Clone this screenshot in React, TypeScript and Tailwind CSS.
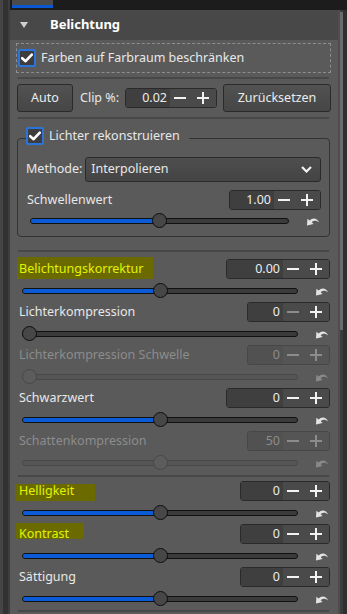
import type { ReactNode } from 'react';

function Check() {
  return (
    <span className="flex h-[18px] w-[18px] shrink-0 items-center justify-center rounded-[2px] border-2 border-[#2b74dc] bg-[#3d3d3d]">
      <svg width="12" height="10" viewBox="0 0 12 10">
        <path d="M1.2 5.2 L4.6 8.2 L10.8 1.6" stroke="#fff" strokeWidth="2.6" fill="none" strokeLinejoin="round" strokeLinecap="round" />
      </svg>
    </span>
  );
}

function Minus({ off }: { off?: boolean }) {
  return (
    <svg width="12" height="12" viewBox="0 0 12 12">
      <rect x="0" y="5" width="12" height="2" fill={off ? '#8c8c8c' : '#f2f2f2'} />
    </svg>
  );
}

function Plus({ off }: { off?: boolean }) {
  return (
    <svg width="12" height="12" viewBox="0 0 12 12">
      <rect x="0" y="5" width="12" height="2" fill={off ? '#8c8c8c' : '#f2f2f2'} />
      <rect x="5" y="0" width="2" height="12" fill={off ? '#8c8c8c' : '#f2f2f2'} />
    </svg>
  );
}

function Spin({ value, w, disabled, minusOff }: { value: string; w: string; disabled?: boolean; minusOff?: boolean }) {
  return (
    <div
      className={`flex h-[20px] overflow-hidden rounded-[3px] border ${
        disabled ? 'border-[#474747]' : 'border-[#2a2a2a]'
      }`}
    >
      <div
        className={`${w} pr-[3px] text-right leading-[18px] ${
          disabled ? 'bg-[#515151] text-[#8c8c8c]' : 'bg-[#3f3f3f] text-[#ececec]'
        }`}
      >
        {value}
      </div>
      <div className={`flex w-[46px] items-center gap-[11px] pl-[4px] ${disabled ? 'bg-[#555555]' : 'bg-[#4a4a4a]'}`}>
        <Minus off={disabled || minusOff} />
        <Plus off={disabled} />
      </div>
    </div>
  );
}

function Reset({ off }: { off?: boolean }) {
  return (
    <svg width="14" height="10" viewBox="0 0 14 10">
      <path
        d="M1 9.5 L1.4 2.8 L3.6 4.6 C6.5 1.4 11 1.6 13.2 6.6 C10.6 4.2 7.6 4.2 5.7 6.3 L7.6 8.1 Z"
        fill={off ? '#8a8a8a' : '#e4e4e4'}
      />
    </svg>
  );
}

function Slider({ p, fill, disabled }: { p: number; fill?: boolean; disabled?: boolean }) {
  return (
    <div className="relative h-[15px] flex-1">
      <div
        className={`absolute left-0 right-0 top-[5px] h-[6px] overflow-hidden rounded-full border ${
          disabled ? 'border-[#484848] bg-[#565656]' : 'border-[#111111] bg-[#3b3b3b]'
        }`}
      >
        {fill && <div className="h-full bg-[#0b5ad6]" style={{ width: `${p * 100}%` }} />}
      </div>
      <div
        className={`absolute top-0 h-[15px] w-[15px] rounded-full border ${
          disabled ? 'border-[#484848] bg-[#5c5c5c]' : 'border-[#0e0e0e] bg-[#474747]'
        }`}
        style={{ left: `calc(${p * 100}% - ${p * 15}px)` }}
      />
    </div>
  );
}

function Sep({ className }: { className: string }) {
  return <div className={`mx-[2px] h-[2px] bg-[#474747] ${className}`} />;
}

type Param = {
  label: string;
  value: string;
  w: string;
  p: number;
  fill?: boolean;
  disabled?: boolean;
  minusOff?: boolean;
  mark?: string;
};

function ParamRow({ item }: { item: Param }) {
  const labelCls = item.disabled ? 'text-[#8c8c8c]' : item.mark ? 'text-[#e2f400]' : 'text-[#e8e8e8]';
  return (
    <div>
      <div className="flex h-[20px] items-center justify-between pl-[3px] pr-[1px]">
        <span className={`relative ${labelCls}`}>
          {item.mark && <span className={`absolute bg-[#6a6a00] ${item.mark}`} />}
          <span className="relative">{item.label}</span>
        </span>
        <Spin value={item.value} w={item.w} disabled={item.disabled} minusOff={item.minusOff} />
      </div>
      <div className="flex h-[23px] items-center">
        <div className="ml-[6px] flex flex-1 items-center">
          <Slider p={item.p} fill={item.fill} disabled={item.disabled} />
        </div>
        <div className="flex w-[33px] justify-end pr-[2px] pt-[1px]">
          <Reset off={item.disabled} />
        </div>
      </div>
    </div>
  );
}

const first: Param[] = [
  { label: 'Belichtungskorrektur', value: '0.00', w: 'w-[56px]', p: 0.5, fill: true, mark: '-left-[2px] -top-[3px] h-[22px] w-[136px]' },
  { label: 'Lichterkompression', value: '0', w: 'w-[35px]', p: 0, minusOff: true },
  { label: 'Lichterkompression Schwelle', value: '0', w: 'w-[35px]', p: 0, disabled: true },
  { label: 'Schwarzwert', value: '0', w: 'w-[56px]', p: 0.5, fill: true },
  { label: 'Schattenkompression', value: '50', w: 'w-[35px]', p: 0.5, disabled: true },
];

const second: Param[] = [
  { label: 'Helligkeit', value: '0', w: 'w-[42px]', p: 0.5, fill: true, mark: '-left-[4px] top-[2px] h-[17px] w-[80px]' },
  { label: 'Kontrast', value: '0', w: 'w-[42px]', p: 0.5, fill: true, mark: '-left-[3px] -top-[2px] h-[16px] w-[68px]' },
  { label: 'Sättigung', value: '0', w: 'w-[42px]', p: 0.5, fill: true },
];

function Button({ className, children }: { className: string; children: ReactNode }) {
  return (
    <div
      className={`flex h-[28px] items-center justify-center rounded-[3px] border border-[#2a2a2a] bg-gradient-to-b from-[#525252] to-[#464646] text-[#ececec] ${className}`}
    >
      {children}
    </div>
  );
}

export default function App() {
  return (
    <div className="flex h-[614px] w-[347px] overflow-hidden bg-[#333333] font-['Noto_Sans',sans-serif] text-[12.5px] text-[#e8e8e8]">
      {/* left frame */}
      <div className="w-[3px] bg-[#454545]" />
      <div className="w-[5px] bg-[#323232]" />
      <div className="w-[2px] bg-[#3d3d3d]" />

      <div className="flex flex-1 flex-col">
        {/* tab strip */}
        <div className="h-[10px] bg-[#1c1c1c]">
          <div className="ml-[2px] w-[41px]">
            <div className="h-[5px] bg-[#4b4b4b]" />
            <div className="h-[3px] bg-[#0a58d0]" />
          </div>
        </div>

        <div className="flex flex-1">
          <div className="flex w-[328px] flex-col">
            {/* section header */}
            <div className="flex h-[30px] items-center bg-[#484848] pl-[10px]">
              <svg width="8" height="6" viewBox="0 0 8 6">
                <path d="M0 0 L8 0 L4 6 Z" fill="#cfcfcf" />
              </svg>
              <span className="ml-[22px] text-[13px] font-bold text-white">Belichtung</span>
            </div>

            <div className="flex-1 bg-[#5a5a5a] pl-[6px] pr-[7px]">
              <div className="mt-[3px] flex h-[30px] items-center border border-dashed border-[#8e8e8e] pl-[1px]">
                <Check />
                <span className="ml-[5px]">Farben auf Farbraum beschränken</span>
              </div>

              <Sep className="mt-[4px]" />

              <div className="mt-[5px] flex items-center">
                <Button className="ml-[1px] w-[56px]">Auto</Button>
                <span className="ml-[7px]">Clip %:</span>
                <div className="ml-auto">
                  <Spin value="0.02" w="w-[44px]" />
                </div>
                <Button className="ml-[6px] w-[108px]">Zurücksetzen</Button>
              </div>

              <Sep className="mt-[5px]" />

              <fieldset className="mx-[1px] mt-[8px] rounded-[4px] border border-[#333333] px-[8px] pb-[6px]">
                <legend className="pr-[9px]">
                  <div className="flex h-[18px] items-center">
                    <Check />
                    <span className="ml-[5px]">Lichter rekonstruieren</span>
                  </div>
                  <div className="h-[5px]" />
                </legend>

                <div className="mt-[7px] flex h-[25px] items-center">
                  <span>Methode:</span>
                  <div className="ml-[3px] flex h-[25px] flex-1 items-center justify-between rounded-[3px] border border-[#2a2a2a] bg-gradient-to-b from-[#4e4e4e] to-[#444444] pl-[5px] pr-[8px]">
                    <span>Interpolieren</span>
                    <svg width="11" height="7" viewBox="0 0 11 7">
                      <path d="M1 1 L5.5 5.5 L10 1" stroke="#f2f2f2" strokeWidth="2.2" fill="none" />
                    </svg>
                  </div>
                </div>

                <div className="mt-[8px] flex h-[20px] items-center justify-between pl-[1px]">
                  <span>Schwellenwert</span>
                  <Spin value="1.00" w="w-[44px]" />
                </div>
                <div className="flex h-[20px] items-center">
                  <div className="ml-[4px] flex flex-1 items-center">
                    <Slider p={0.5} fill />
                  </div>
                  <div className="flex w-[32px] justify-end pr-[1px] pt-[1px]">
                    <Reset />
                  </div>
                </div>
              </fieldset>

              <Sep className="mt-[13px]" />

              <div className="mt-[7px]">
                {first.map((item) => (
                  <ParamRow key={item.label} item={item} />
                ))}
              </div>

              <Sep className="mt-[1px]" />

              <div className="mt-[4px]">
                {second.map((item) => (
                  <ParamRow key={item.label} item={item} />
                ))}
              </div>

              <Sep className="mt-[0px]" />
            </div>
          </div>

          {/* scrollbar */}
          <div className="w-[2px] bg-[#4e4e4e]" />
          <div className="flex w-[3px] flex-col bg-[#3c3c3c]">
            <div className="mt-[2px] h-[318px] bg-[#6b6b6b]" />
          </div>
          <div className="w-[4px] bg-[#2f2f2f]" />
        </div>
      </div>
    </div>
  );
}
